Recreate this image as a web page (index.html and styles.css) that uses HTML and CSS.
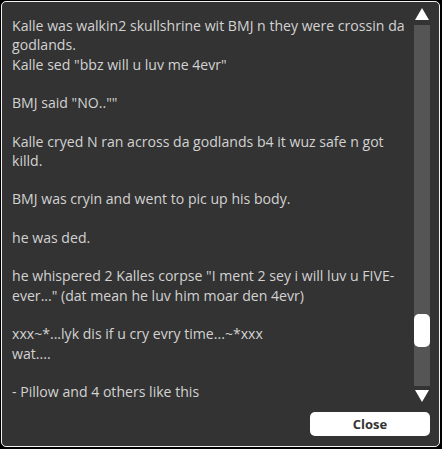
FILE: index.html
```html
<!DOCTYPE html>
<html>
<head>
<meta charset="utf-8">
<link rel="stylesheet" href="styles.css">
</head>
<body>
<div class="panel">
  <div class="main">
    <div class="story">
      <p class="line">Kalle was walkin2 skullshrine wit BMJ n they were crossin da<br>godlands.</p>
      <p class="line">Kalle sed "bbz will u luv me 4evr"</p>
      <p class="gap"></p>
      <p class="line">BMJ said "NO..""</p>
      <p class="gap"></p>
      <p class="line">Kalle cryed N ran across da godlands b4 it wuz safe n got<br>killd.</p>
      <p class="gap"></p>
      <p class="line">BMJ was cryin and went to pic up his body.</p>
      <p class="gap"></p>
      <p class="line">he was ded.</p>
      <p class="gap"></p>
      <p class="line">he whispered 2 Kalles corpse "I ment 2 sey i will luv u FIVE-<br>ever..." (dat mean he luv him moar den 4evr)</p>
      <p class="gap"></p>
      <p class="line">xxx~*...lyk dis if u cry evry time...~*xxx</p>
      <p class="line">wat....</p>
      <p class="gap"></p>
      <p class="line">- Pillow and 4 others like this</p>
    </div>
    <div class="scrollbar">
      <div class="arrow up"></div>
      <div class="track"><div class="thumb"></div></div>
      <div class="arrow down"></div>
    </div>
  </div>
  <div class="footer">
    <button class="close">Close</button>
  </div>
</div>
</body>
</html>
```

FILE: styles.css
```css
html, body {
  margin: 0;
  padding: 0;
  background: #000;
}
body {
  width: 442px;
  height: 449px;
  overflow: hidden;
}
.panel {
  box-sizing: border-box;
  margin: 1px 0 0 1px;
  width: 439px;
  height: 446px;
  border: 1px solid #f2f2f2;
  border-radius: 5px;
  background: #333333;
  display: flex;
  flex-direction: column;
}
.main {
  flex: 1;
  display: flex;
  min-height: 0;
}
.story {
  flex: 1;
  padding: 14px 0 0 10px;
  font-family: "Open Sans", "Noto Sans", sans-serif;
  font-size: 14.1px;
  line-height: 19.27px;
  color: #d2d2d2;
  white-space: nowrap;
  overflow: hidden;
}
.line, .gap {
  margin: 0;
}
.gap {
  height: 19.27px;
}
.scrollbar {
  width: 16px;
  margin-right: 9px;
  padding-top: 6px;
  display: flex;
  flex-direction: column;
  align-items: center;
}
.arrow {
  width: 0;
  height: 0;
  border-left: 7px solid transparent;
  border-right: 7px solid transparent;
}
.arrow.up {
  border-bottom: 12px solid #ffffff;
}
.arrow.down {
  border-top: 12px solid #ffffff;
  margin-top: 4px;
}
.track {
  margin-top: 5px;
  width: 16px;
  height: 361px;
  background: #555555;
  position: relative;
}
.thumb {
  position: absolute;
  left: 0;
  top: 289px;
  width: 16px;
  height: 33px;
  background: #ffffff;
  border-radius: 5px;
}
.footer {
  display: flex;
  justify-content: flex-end;
  padding: 8px 9px 10px 0;
}
.close {
  width: 120px;
  height: 24px;
  border: none;
  border-radius: 5px;
  background: #ffffff;
  color: #333333;
  font-family: "Open Sans", "Noto Sans", sans-serif;
  font-weight: 700;
  font-size: 13px;
  padding: 0;
}
```
